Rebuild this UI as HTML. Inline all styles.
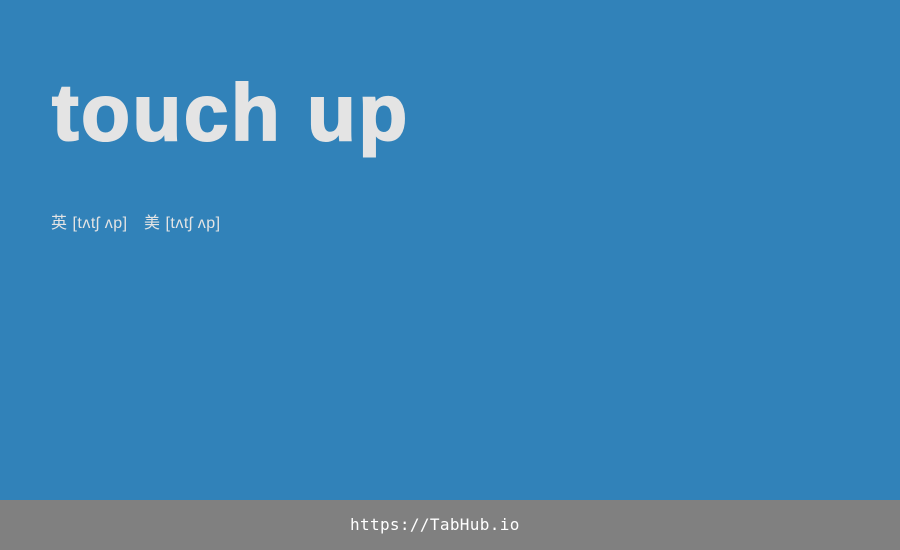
<!DOCTYPE html>
<html><head><meta charset="utf-8"><style>
body{margin:0;width:900px;height:550px;background:#3182b9;position:relative;overflow:hidden}
.t{position:absolute;left:52px;top:73px;font:bold 80px/1 "Liberation Sans",sans-serif;color:#e4e4e4;white-space:nowrap;letter-spacing:2.5px;-webkit-text-stroke:2px #e4e4e4}
.p{position:absolute;top:214px;font:16px/20px "Liberation Sans","Noto Sans CJK SC",sans-serif;color:#e4e4e4;white-space:pre;letter-spacing:0.5px}
.f{position:absolute;left:0;top:500px;width:900px;height:50px;background:#808080}
.f span{position:absolute;left:350px;top:0;color:#fff;font:16px/50px "DejaVu Sans Mono","Liberation Mono",monospace;letter-spacing:0.35px}
</style></head><body>
<div class="t">touch up</div>
<div class="p" style="left:51px">英 [tʌtʃ ʌp]</div>
<div class="p" style="left:144px">美 [tʌtʃ ʌp]</div>
<div class="f"><span>https://TabHub.io</span></div>
</body></html>
